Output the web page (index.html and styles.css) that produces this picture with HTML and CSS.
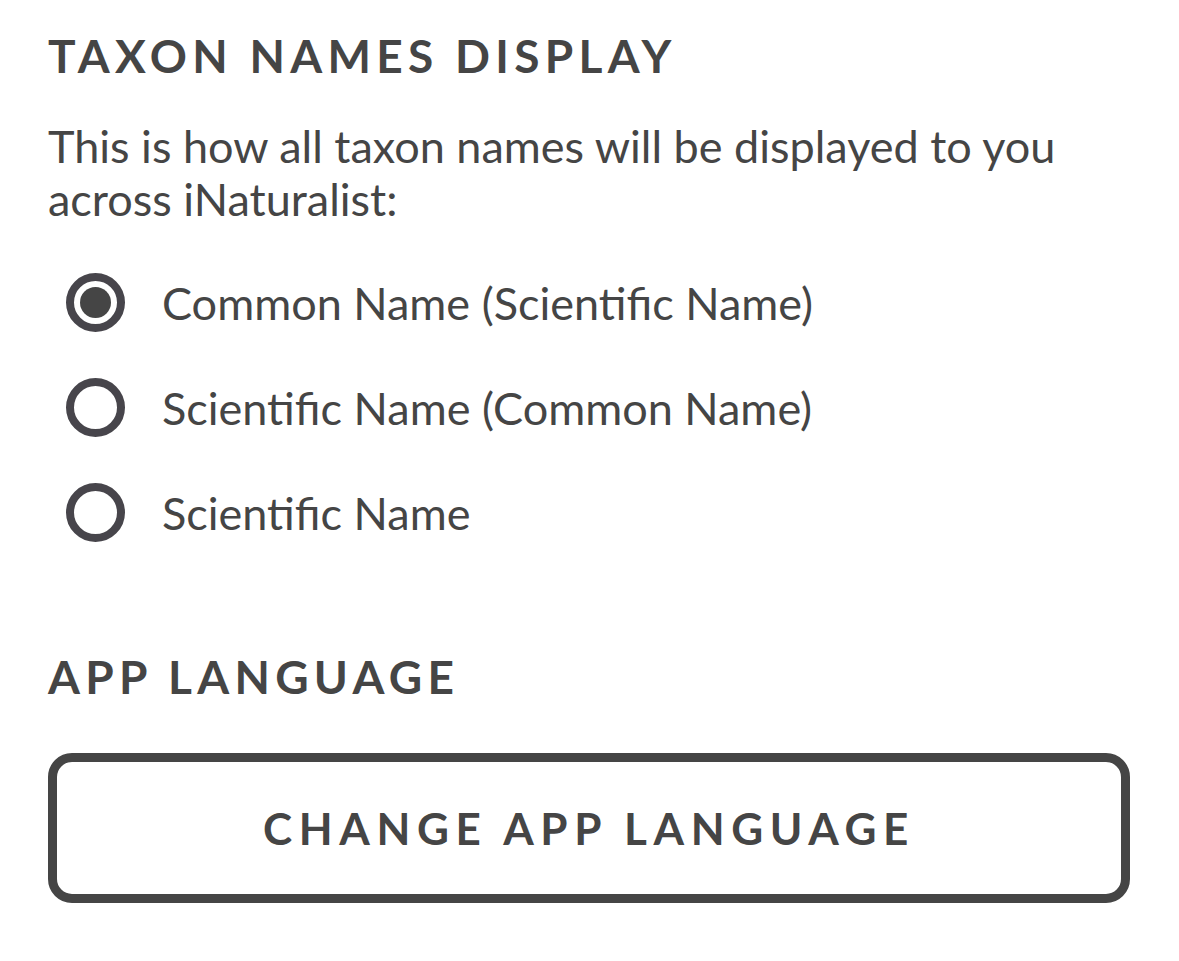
FILE: index.html
```html
<!DOCTYPE html>
<html lang="en">
<head>
<meta charset="utf-8">
<title>Settings</title>
<link rel="stylesheet" href="styles.css">
</head>
<body>
<main class="settings">
  <h2 class="section-title">TAXON NAMES DISPLAY</h2>
  <p class="description">This is how all taxon names will be displayed to you across iNaturalist:</p>
  <ul class="radio-list">
    <li class="radio-row"><span class="radio radio-checked"><span class="radio-dot"></span></span><span class="radio-label">Common Name (Scientific Name)</span></li>
    <li class="radio-row"><span class="radio"></span><span class="radio-label">Scientific Name (Common Name)</span></li>
    <li class="radio-row"><span class="radio"></span><span class="radio-label">Scientific Name</span></li>
  </ul>
  <h2 class="section-title section-title-second">APP LANGUAGE</h2>
  <button class="outline-button" type="button">CHANGE APP LANGUAGE</button>
</main>
</body>
</html>
```
FILE: styles.css
```css
html, body {
  margin: 0;
  padding: 0;
  background: #ffffff;
}

body {
  font-family: Lato, "Noto Sans", sans-serif;
  color: #454545;
}

.settings {
  padding: 28px 49px 0 48px;
  display: flex;
  flex-direction: column;
}

.section-title {
  margin: 0;
  font-size: 46px;
  line-height: 56px;
  font-weight: 700;
  letter-spacing: 5.3px;
  color: #454545;
}

.description {
  margin: 36px 0 0 0;
  font-size: 45px;
  line-height: 53px;
  font-weight: 400;
}

.radio-list {
  list-style: none;
  margin: 24px 0 0 0;
  padding: 0 0 0 18px;
  display: flex;
  flex-direction: column;
}

.radio-row {
  height: 105px;
  display: flex;
  align-items: center;
  gap: 37px;
}

.radio {
  box-sizing: border-box;
  width: 59px;
  height: 59px;
  border: 8px solid #47454b;
  border-radius: 50%;
  display: flex;
  align-items: center;
  justify-content: center;
  flex: none;
}

.radio-dot {
  width: 31px;
  height: 31px;
  border-radius: 50%;
  background: #454545;
}

.radio-label {
  font-size: 45px;
  line-height: 56px;
}

.section-title-second {
  margin-top: 84px;
}

.outline-button {
  margin-top: 48px;
  box-sizing: border-box;
  height: 150px;
  width: 100%;
  border: 9px solid #454545;
  border-radius: 24px;
  background: #ffffff;
  font-family: Lato, "Noto Sans", sans-serif;
  font-size: 44px;
  font-weight: 700;
  letter-spacing: 6.6px;
  color: #454545;
  padding: 0;
}
```
